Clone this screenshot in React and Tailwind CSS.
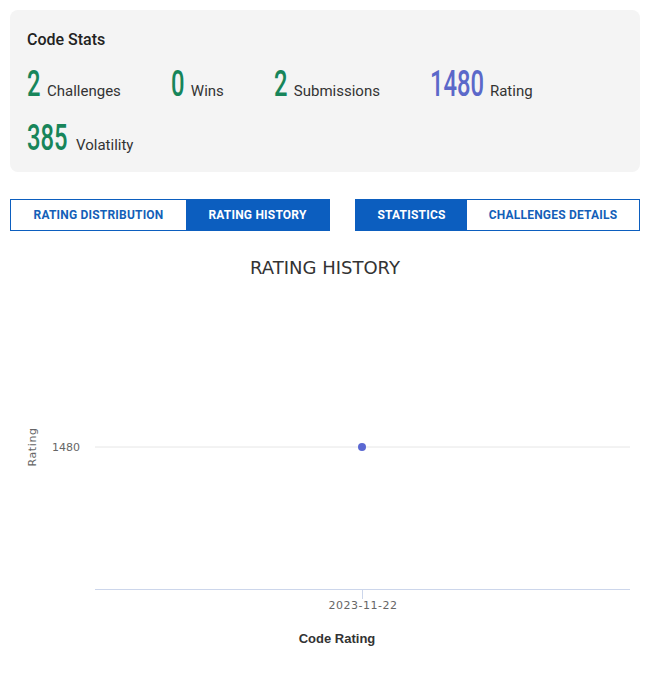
import { useState } from "react";

const stats = [
  { value: "2", label: "Challenges", color: "text-[#17855a]", box: "w-[13px]" },
  { value: "0", label: "Wins", color: "text-[#17855a]", box: "w-[13px]" },
  { value: "2", label: "Submissions", color: "text-[#17855a]", box: "w-[13px]" },
  { value: "1480", label: "Rating", color: "text-[#5b68c9]", box: "w-[53px]" },
  { value: "385", label: "Volatility", color: "text-[#17855a]", box: "w-[42px]" },
];

function Tab({ label, active, width, onClick }) {
  return (
    <button
      onClick={onClick}
      className={
        "h-[30px] text-[12px] font-bold tracking-[0.2px] " +
        width +
        (active ? " bg-[#0c5ebf] text-white" : " bg-white text-[#145fb8]")
      }
    >
      {label}
    </button>
  );
}

function RatingChart() {
  return (
    <div className="mt-[25px]">
      <div className="text-center text-[18px] leading-[24px] text-[#333] font-['DejaVu_Sans',sans-serif]">
        RATING HISTORY
      </div>
      <svg width="630" height="330" viewBox="0 0 630 330" className="mt-[10px] block">
        <g fontFamily="DejaVu Sans, sans-serif" fontSize="11" fill="#666">
          <text
            x="0"
            y="0"
            transform="translate(26 157) rotate(-90)"
            textAnchor="middle"
            letterSpacing="0.6"
          >
            Rating
          </text>
          <text x="70" y="161" textAnchor="end">1480</text>
          <text x="353" y="319" textAnchor="middle" letterSpacing="0.5">2023-11-22</text>
        </g>
        <line x1="85" y1="157" x2="620" y2="157" stroke="#e6e6e6" strokeWidth="1" />
        <line x1="85" y1="299.5" x2="620" y2="299.5" stroke="#ccd6eb" strokeWidth="1" />
        <line x1="352.5" y1="299" x2="352.5" y2="309" stroke="#ccd6eb" strokeWidth="1" />
        <circle cx="352" cy="157" r="4" fill="#5b68d2" />
      </svg>
      <div className="mt-[10px] pl-[24px] text-center text-[13px] leading-[18px] font-bold text-[#333] font-['Liberation_Sans',sans-serif]">
        Code Rating
      </div>
    </div>
  );
}

export default function App() {
  const [view, setView] = useState("history");
  const [panel, setPanel] = useState("statistics");

  return (
    <div className="min-h-screen bg-white pl-[10px] pr-[23px] pt-[10px] font-['Roboto',sans-serif]">
      <div className="rounded-lg bg-[#f4f4f4] pl-[17px] pt-[18px] pb-[7px]">
        <div className="text-[16px] leading-[24px] font-medium text-[#222]">Code Stats</div>
        <div className="mt-[5px] flex flex-wrap gap-x-[50px]">
          {stats.map((s) => (
            <div key={s.label} className="flex items-baseline h-[54px]">
              <span className={"inline-block whitespace-nowrap " + s.box}>
                <span
                  className={
                    "inline-block origin-left scale-x-[0.66] text-[36px] leading-[54px] font-medium font-['Roboto',sans-serif] " +
                    s.color
                  }
                >
                  {s.value}
                </span>
              </span>
              <span className="ml-[7px] text-[15px] text-[#333]">{s.label}</span>
            </div>
          ))}
        </div>
      </div>

      <div className="mt-[27px] flex justify-between">
        <div className="flex border border-[#0c5ebf]">
          <Tab
            label="RATING DISTRIBUTION"
            width="w-[175px]"
            active={view === "distribution"}
            onClick={() => setView("distribution")}
          />
          <Tab
            label="RATING HISTORY"
            width="w-[143px]"
            active={view === "history"}
            onClick={() => setView("history")}
          />
        </div>
        <div className="flex border border-[#0c5ebf]">
          <Tab
            label="STATISTICS"
            width="w-[111px]"
            active={panel === "statistics"}
            onClick={() => setPanel("statistics")}
          />
          <Tab
            label="CHALLENGES DETAILS"
            width="w-[172px]"
            active={panel === "details"}
            onClick={() => setPanel("details")}
          />
        </div>
      </div>

      <RatingChart />
    </div>
  );
}
